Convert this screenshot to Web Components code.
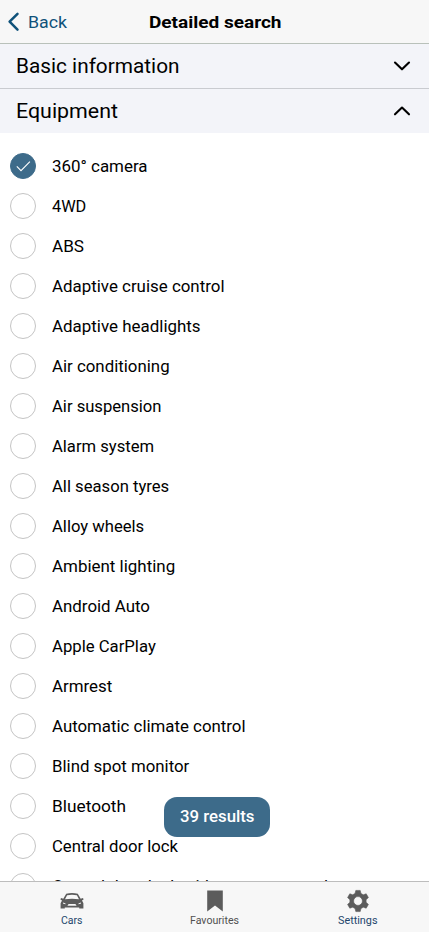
<!DOCTYPE html>
<html lang="en">
<head>
<meta charset="utf-8">
<title>Detailed search</title>
<style>
html,body{margin:0;height:100%;overflow:hidden;background:#fff}
body{font-family:Roboto,"Noto Sans",sans-serif;color:#000}
</style>
</head>
<body>
<search-app></search-app>
<script>
// Single-line label widened so that it fills the width given in "w".
class FitText extends HTMLElement{
  connectedCallback(){
    const r=this.attachShadow({mode:'open'});
    r.innerHTML='<style>:host{display:block;white-space:nowrap}span{display:inline-block;transform-origin:0 50%}</style><span></span>';
    const s=r.querySelector('span');
    s.textContent=this.getAttribute('text');
    const w=parseFloat(this.getAttribute('w'));
    const k=w/s.getBoundingClientRect().width;
    this.style.width=w+'px';
    s.style.transform=`scaleX(${k})`;
  }
}
customElements.define('fit-text',FitText);

class NavHeader extends HTMLElement{
  connectedCallback(){
    this.attachShadow({mode:'open'}).innerHTML=`<style>
:host{display:grid;grid-template-columns:149px 1fr;height:43px;border-bottom:1px solid #b9c1ba;background:#f7f7f7;align-items:center;box-sizing:content-box}
.back{display:flex;align-items:center;color:#0f527a;font-size:17px;line-height:24px}
svg{width:28px;height:24px;display:block}
.title{font-size:17px;font-weight:700;line-height:24px}
</style><div class="back"><svg viewBox="0 0 28 24"><path d="M17.5 3.8 9.6 11.7 17.5 19.6" fill="none" stroke="#0f527a" stroke-width="2.5" stroke-linecap="round" stroke-linejoin="round"/></svg><fit-text text="Back" w="39"></fit-text></div>
<fit-text class="title" text="Detailed search" w="132.5"></fit-text>`;
  }
}
customElements.define('nav-header',NavHeader);

class SectionRow extends HTMLElement{
  connectedCallback(){
    const up=this.hasAttribute('open');
    this.attachShadow({mode:'open'}).innerHTML=`<style>
:host{display:flex;align-items:center;justify-content:space-between;height:44px;padding:0 18px 0 16px;background:#f3f4f9;font-size:20px;line-height:28px}
:host(:not([open])){border-bottom:1px solid #c9cbd0}
svg{width:18px;height:12px;display:block}
</style><fit-text text="${this.getAttribute('label')}" w="${this.getAttribute('w')}"></fit-text>
<svg viewBox="0 0 18 12"><path d="${up?'M2 9.3 9 2.5 16 9.3':'M2 2.5 9 9.3 16 2.5'}" fill="none" stroke="#000" stroke-width="2.1" stroke-linecap="round" stroke-linejoin="round"/></svg>`;
  }
}
customElements.define('section-row',SectionRow);

class CheckRow extends HTMLElement{
  connectedCallback(){
    this.attachShadow({mode:'open'}).innerHTML=`<style>
:host{display:flex;align-items:center;height:40px;gap:16px;padding-left:10px;font-size:16px;line-height:24px}
i{width:26px;height:26px;box-sizing:border-box;border:1px solid #c4c4c4;border-radius:50%;flex:none}
:host([checked]) i{background:#3d6b8a;border-color:#3d6b8a}
svg{display:none;width:24px;height:24px}
:host([checked]) svg{display:block}
fit-text{padding-top:1px}
:host(:last-child) fit-text{padding-top:2px}
</style><i><svg viewBox="0 0 24 24"><path d="M5.8 12.4 10 16.6 18.9 7.6" fill="none" stroke="#fff" stroke-width="1.1"/></svg></i>
<fit-text text="${this.getAttribute('label')}" w="${this.getAttribute('w')}"></fit-text>`;
  }
}
customElements.define('check-row',CheckRow);

const ICONS={
car:`<svg viewBox="0 0 24 24"><path fill="#5c5c5c" fill-rule="evenodd" d="M6.2 4.7Q12 3.4 17.8 4.7L20.7 9.8 23 9.1 23.6 10.5 22 11.5 23.4 14.2V19.6H19.2V18.6H4.8V19.6H.6V14.2L2 11.5.4 10.5 1 9.1 3.3 9.8ZM7.1 6.3 5 10.3Q12 9.4 19 10.3L16.9 6.3Q12 5.4 7.1 6.3ZM2.9 13.6 3.2 14.8 5.8 15.2 5.2 14.3ZM21.1 13.6 18.8 14.3 18.2 15.2 20.8 14.8ZM8.6 15 7.4 16.8H16.6L15.4 15Z"/></svg>`,
mark:`<svg viewBox="0 0 24 24"><path fill="#5c5c5c" d="M4.2 1.4H19.8V22.6L12 16.4 4.2 22.6Z"/></svg>`,
gear:`<svg viewBox="0 0 24 24"><path fill="#5c5c5c" fill-rule="evenodd" d="M9.8 1.4H14.2L15 4.5 17.3 5.8 20.2 4.8 22.4 8.6 20.1 10.8V13.2L22.4 15.4 20.2 19.2 17.3 18.2 15 19.5 14.2 22.6H9.8L9 19.5 6.7 18.2 3.8 19.2 1.6 15.4 3.9 13.2V10.8L1.6 8.6 3.8 4.8 6.7 5.8 9 4.5ZM12 7.6A4.4 4.4 0 1 0 12 16.4 4.4 4.4 0 1 0 12 7.6Z" stroke="#5c5c5c" stroke-width=".6" stroke-linejoin="round"/></svg>`};
class TabItem extends HTMLElement{
  connectedCallback(){
    this.attachShadow({mode:'open'}).innerHTML=`<style>
:host{display:flex;flex-direction:column;align-items:center;padding-top:7px;font-size:10px;line-height:14px;gap:1px;color:#505050}
:host([linked]){color:#24466c}
svg{width:24px;height:24px;display:block}
</style>${ICONS[this.getAttribute('icon')]}<fit-text text="${this.getAttribute('label')}" w="${this.getAttribute('w')}"></fit-text>`;
  }
}
customElements.define('tab-item',TabItem);

class TabBar extends HTMLElement{
  connectedCallback(){
    this.attachShadow({mode:'open'}).innerHTML=`<style>
:host{display:grid;grid-template-columns:repeat(3,1fr);height:50px;border-top:1px solid #bdbdbd;background:#f7f7f7}
</style><slot></slot>`;
  }
}
customElements.define('tab-bar',TabBar);

class ResultButton extends HTMLElement{
  connectedCallback(){
    this.attachShadow({mode:'open'}).innerHTML=`<style>
:host{display:flex;align-items:center;justify-content:center;width:106px;height:40px;border-radius:13px;background:#3d6b8a;color:#fff;font-size:16px;font-weight:500;line-height:24px}
</style><fit-text text="39 results" w="74.5"></fit-text>`;
  }
}
customElements.define('result-button',ResultButton);

const ROWS=[['360° camera',95.5],['4WD',34.3],['ABS',32],['Adaptive cruise control',172.5],['Adaptive headlights',148.6],['Air conditioning',117.6],['Air suspension',109.5],['Alarm system',102],['All season tyres',117.2],['Alloy wheels',92.2],['Ambient lighting',123.2],['Android Auto',98],['Apple CarPlay',103.8],['Armrest',60.3],['Automatic climate control',193.5],['Blind spot monitor',137.3],['Bluetooth',74],['Central door lock',126],['Central door lock with remote control',276]];
class SearchApp extends HTMLElement{
  connectedCallback(){
    this.attachShadow({mode:'open'}).innerHTML=`<style>
:host{display:flex;flex-direction:column;height:932px;width:429px;position:relative;overflow:hidden}
nav-header,section-row,tab-bar{flex:none}
main{flex:1;min-height:0;overflow:hidden;padding-top:13px}
result-button{position:absolute;left:164px;top:797px}
</style><nav-header></nav-header>
<section-row label="Basic information" w="163.5"></section-row>
<section-row open label="Equipment" w="102"></section-row>
<main>${ROWS.map(([t,w],i)=>`<check-row ${i?'':'checked'} label="${t}" w="${w}"></check-row>`).join('')}</main>
<tab-bar><tab-item icon="car" linked label="Cars" w="21.5"></tab-item><tab-item icon="mark" label="Favourites" w="49"></tab-item><tab-item icon="gear" linked label="Settings" w="39.5"></tab-item></tab-bar>
<result-button></result-button>`;
  }
}
customElements.define('search-app',SearchApp);
</script>
</body>
</html>
